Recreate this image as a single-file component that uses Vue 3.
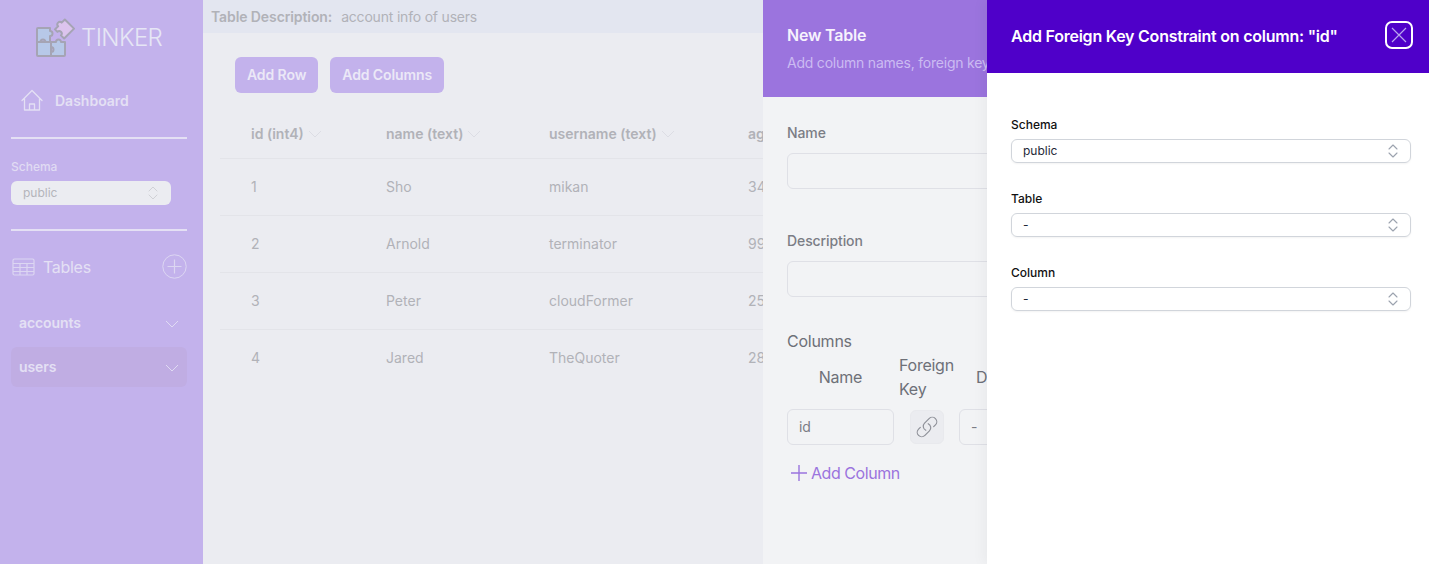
<template>
  <div class="app">
    <aside class="sidebar">
      <div class="logo">
        <svg class="logo-icon" width="40" height="40" viewBox="0 0 40 40" stroke="#a5a4b4" stroke-width="2" stroke-linejoin="round">
          <path d="M2 24H16V38H3a1 1 0 0 1-1-1z" fill="#b7c8e8" />
          <path d="M3 10H15V13a2.500 2.500 0 0 1 0 5V24H10.500a2.500 2.500 0 0 0-5 0H2V11a1 1 0 0 1 1-1z" fill="#b7c8e8" />
          <path d="M16 24H21a2.500 2.500 0 0 1 5 0H30V37a1 1 0 0 1-1 1H16V34a2.500 2.500 0 0 0 0-5z" fill="#b7c8e8" />
          <path d="M23 4H36V18H31.500a2.500 2.500 0 0 0-5 0H23V13.500a2.500 2.500 0 0 1 0-5z" fill="#dcc4ee" transform="rotate(45 29.500 11)" />
        </svg>
        <span class="logo-text">TINKER</span>
      </div>
      <div class="dash">
        <svg width="24" height="24" viewBox="0 0 24 24" fill="none" stroke="#e4e0f4" stroke-width="1.3" stroke-linejoin="round" stroke-linecap="round">
          <path d="M2 12.500L12 2.500l10 10M4.500 10.500V22h15V10.500M9.500 22v-6h5v6" />
        </svg>
        <span>Dashboard</span>
      </div>
      <hr class="rule" />
      <div class="side-schema">
        <label>Schema</label>
        <div class="side-select">
          <span>public</span>
          <svg width="12" height="16" viewBox="0 0 12 16" fill="none" stroke="#d0d1d6" stroke-width="1" stroke-linecap="round" stroke-linejoin="round">
            <path d="M2 6l4-4 4 4M2 10l4 4 4-4" />
          </svg>
        </div>
      </div>
      <hr class="rule rule-2" />
      <div class="tables-head">
        <svg width="23" height="18" viewBox="0 0 23 18" fill="none" stroke="#dcd6f2" stroke-width="1.2">
          <rect x="1" y="1" width="21" height="16" rx="1.5" />
          <path d="M1 5.500h21M1 9.500h21M1 13.500h21M8 5.500V17M15 5.500V17" />
        </svg>
        <span class="tables-label">Tables</span>
        <svg class="plus" width="25" height="25" viewBox="0 0 25 25" fill="none" stroke="#dcd6f2" stroke-width="1">
          <circle cx="12.500" cy="12.500" r="11.700" />
          <path d="M12.500 5.500v14M5.500 12.500h14" stroke-width="1.2" />
        </svg>
      </div>
      <div class="table-list">
        <div v-for="t in tables" :key="t.name" class="table-item" :class="{ active: t.active }">
          <span>{{ t.name }}</span>
          <svg width="14" height="8" viewBox="0 0 14 8" fill="none" stroke="#e0dbf3" stroke-width="1">
            <path d="M1 1l6 6 6-6" />
          </svg>
        </div>
      </div>
    </aside>

    <main class="main">
      <div class="desc">
        <b>Table Description:</b>
        <span>account info of users</span>
      </div>
      <div class="actions">
        <button class="btn">Add Row</button>
        <button class="btn">Add Columns</button>
      </div>
      <div class="grid">
        <div class="grid-row grid-head">
          <div v-for="c in columns" :key="c" class="cell">
            {{ c }}
            <svg width="14" height="8" viewBox="0 0 14 8" fill="none" stroke="#dcdde4" stroke-width="1">
              <path d="M1 1l6 6 6-6" />
            </svg>
          </div>
        </div>
        <div v-for="r in rows" :key="r[0]" class="grid-row">
          <div v-for="v in r" :key="v" class="cell">{{ v }}</div>
        </div>
      </div>
    </main>

    <section class="panel-table">
      <header class="pt-head">
        <h2>New Table</h2>
        <p>Add column names, foreign keys and default values</p>
      </header>
      <div class="pt-body">
        <label class="pt-label">Name</label>
        <div class="pt-input"></div>
        <label class="pt-label pt-desc">Description</label>
        <div class="pt-input"></div>
        <div class="pt-columns">Columns</div>
        <div class="col-grid">
          <div class="col-name">Name</div>
          <div class="col-fk">Foreign Key</div>
          <div class="col-def">Default</div>
          <div class="id-input">id</div>
          <div class="link-btn">
            <svg width="24" height="24" viewBox="0 0 24 24" fill="none" stroke="#8e9098" stroke-width="1.2" stroke-linecap="round" stroke-linejoin="round">
              <path d="M13.190 8.688a4.500 4.500 0 0 1 1.242 7.244l-4.500 4.500a4.500 4.500 0 0 1-6.364-6.364l1.757-1.757m13.350-.622l1.757-1.757a4.500 4.500 0 0 0-6.364-6.364l-4.500 4.500a4.500 4.500 0 0 0 1.242 7.244" />
            </svg>
          </div>
          <div class="def-input">-</div>
        </div>
        <div class="add-col">
          <svg width="18" height="18" viewBox="0 0 18 18" fill="none" stroke="#9b74de" stroke-width="1.4">
            <path d="M9 1v16M1 9h16" />
          </svg>
          <span>Add Column</span>
        </div>
      </div>
    </section>

    <section class="panel-fk">
      <header class="fk-head">
        <h2>Add Foreign Key Constraint on column: "id"</h2>
        <button class="close">
          <svg width="18" height="18" viewBox="0 0 18 18" fill="none" stroke="#b9a6ee" stroke-width="1.2">
            <path d="M2 2l14 14M16 2L2 16" />
          </svg>
        </button>
      </header>
      <div class="fk-body">
        <div v-for="f in fkFields" :key="f.label" class="field">
          <label>{{ f.label }}</label>
          <div class="fk-select">
            <span>{{ f.value }}</span>
            <svg width="12" height="16" viewBox="0 0 12 16" fill="none" stroke="#9ca3af" stroke-width="1.1" stroke-linecap="round" stroke-linejoin="round">
              <path d="M2 6l4-4 4 4M2 10l4 4 4-4" />
            </svg>
          </div>
        </div>
      </div>
    </section>
  </div>
</template>

<script setup>
const tables = [
  { name: 'accounts', active: false },
  { name: 'users', active: true }
];

const columns = ['id (int4)', 'name (text)', 'username (text)', 'age (int4)'];

const rows = [
  ['1', 'Sho', 'mikan', '34'],
  ['2', 'Arnold', 'terminator', '99'],
  ['3', 'Peter', 'cloudFormer', '25'],
  ['4', 'Jared', 'TheQuoter', '28']
];

const fkFields = [
  { label: 'Schema', value: 'public' },
  { label: 'Table', value: '-' },
  { label: 'Column', value: '-' }
];
</script>

<style>
html,
body {
  margin: 0;
  overflow: hidden;
}
</style>

<style scoped>
* {
  box-sizing: border-box;
}
.app {
  position: relative;
  display: flex;
  width: 1429px;
  height: 564px;
  overflow: hidden;
  font-family: Inter, "Liberation Sans", sans-serif;
  background: #ebecf1;
}
.sidebar {
  width: 203px;
  flex: none;
  background: #c3b2ec;
  padding: 0 16px 0 11px;
  display: flex;
  flex-direction: column;
}
.logo {
  display: flex;
  align-items: center;
  gap: 6px;
  height: 75px;
  padding-left: 24px;
}
.logo-text {
  font-size: 24px;
  letter-spacing: -0.6px;
  color: #e6e6f5;
  font-weight: 300;
}
.dash {
  display: flex;
  align-items: center;
  gap: 11px;
  height: 50px;
  padding-left: 9px;
  font-size: 14px;
  font-weight: 600;
  color: #e4e0f4;
}
.rule {
  width: 100%;
  margin: 12px 0 0;
  border: 0;
  border-top: 2px solid #e4e0f4;
}
.rule-2 {
  margin-top: 24px;
}
.side-schema {
  margin-top: 20px;
}
.side-schema label {
  display: block;
  font-size: 12px;
  font-weight: 500;
  color: #e0dbf3;
  margin-bottom: 7px;
}
.side-select {
  width: 160px;
  height: 24px;
  background: #ebecf1;
  border-radius: 6px;
  display: flex;
  align-items: center;
  justify-content: space-between;
  padding: 0 12px 0;
  font-size: 12px;
  color: #b4b5bb;
}
.side-select span {
  margin-top: -2px;
}
.tables-head {
  display: flex;
  align-items: center;
  height: 25px;
  margin-top: 23px;
  padding-left: 1px;
  color: #e4e0f4;
}
.tables-label {
  font-size: 16px;
  letter-spacing: -0.3px;
  margin-left: 8px;
}
.plus {
  margin-left: auto;
}
.table-list {
  display: flex;
  flex-direction: column;
  gap: 4px;
  margin-top: 24px;
}
.table-item {
  height: 40px;
  padding: 0 8px;
  border-radius: 6px;
  display: flex;
  align-items: center;
  justify-content: space-between;
  font-size: 14px;
  font-weight: 600;
  letter-spacing: -0.1px;
  color: #e4e0f4;
}
.table-item span {
  margin-top: -2px;
}
.table-item.active {
  background: #c0ade3;
}
.table-item svg {
  margin-top: 2px;
}
.main {
  width: 560px;
  flex: none;
  overflow: hidden;
}
.desc {
  height: 33px;
  background: #e3e6f0;
  padding: 0 8px;
  display: flex;
  align-items: center;
  gap: 9px;
  font-size: 14px;
  color: #b1b2b8;
}
.desc b {
  font-weight: 600;
  letter-spacing: -0.1px;
}
.desc span {
  letter-spacing: -0.2px;
}
.actions {
  display: flex;
  gap: 12px;
  padding: 24px 0 0 32px;
}
.btn {
  height: 36px;
  padding: 0 12px 2px;
  border: 0;
  border-radius: 6px;
  background: #c3b2ec;
  color: #ebe8f7;
  font-family: inherit;
  font-size: 14px;
  font-weight: 600;
  letter-spacing: -0.1px;
}
.grid {
  margin: 12px 0 0 17px;
}
.grid-row {
  display: grid;
  grid-template-columns: 135px 163px 199px 300px;
  width: 800px;
  height: 57px;
  padding: 0 0 2px 31px;
  align-items: center;
  border-top: 1px solid #e3e4e9;
  font-size: 14px;
  color: #b1b2b8;
}
.grid-head {
  height: 53px;
  border-top: 0;
  padding: 4px 0 0 31px;
  font-weight: 600;
}
.grid-head .cell {
  display: flex;
  align-items: center;
  gap: 4px;
}
.panel-table {
  position: absolute;
  top: 0;
  left: 763px;
  width: 224px;
  height: 564px;
  background: #f2f3f5;
  overflow: hidden;
  white-space: nowrap;
}
.pt-head {
  height: 97px;
  background: #9b74de;
  padding: 23px 24px 0;
}
.pt-head h2 {
  margin: 0;
  font-size: 16px;
  line-height: 24px;
  font-weight: 600;
  letter-spacing: -0.2px;
  color: #f6f2fd;
}
.pt-head p {
  margin: 6px 0 0;
  font-size: 14px;
  line-height: 20px;
  letter-spacing: -0.22px;
  color: #cbbbf2;
}
.pt-body {
  padding: 26px 24px 0;
}
.pt-label {
  display: block;
  font-size: 14px;
  line-height: 20px;
  font-weight: 500;
  letter-spacing: -0.1px;
  color: #7b7d85;
}
.pt-desc {
  margin-top: 42px;
}
.pt-input {
  width: 400px;
  height: 36px;
  margin-top: 10px;
  border: 1px solid #dfe0e6;
  border-radius: 6px;
}
.pt-columns {
  margin-top: 34px;
  font-size: 16px;
  line-height: 20px;
  letter-spacing: -0.25px;
  color: #6e7078;
}
.col-grid {
  display: grid;
  grid-template-columns: 107px 34px 200px;
  column-gap: 16px;
  row-gap: 8px;
  margin-top: 2px;
  align-items: center;
  font-size: 16px;
  letter-spacing: -0.25px;
  color: #6e7078;
}
.col-name {
  text-align: center;
}
.col-fk {
  width: 60px;
  margin-left: -11px;
  white-space: normal;
  line-height: 24px;
}
.col-def {
  padding-left: 16px;
}
.id-input,
.def-input {
  height: 36px;
  border: 1px solid #dfe0e6;
  border-radius: 6px;
  padding: 0 11px;
  font-size: 14px;
  line-height: 34px;
  color: #7b7d85;
}
.link-btn {
  width: 34px;
  height: 34px;
  border: 1px solid #e8e9ed;
  border-radius: 6px;
  background: #ebecf0;
  display: flex;
  align-items: center;
  justify-content: center;
}
.def-input {
  margin-left: -1px;
}
.add-col {
  display: flex;
  align-items: center;
  gap: 3px;
  margin: 18px 0 0 3px;
  font-size: 16px;
  letter-spacing: -0.45px;
  color: #9b74de;
}
.panel-fk {
  position: absolute;
  top: 0;
  right: 0;
  width: 442px;
  height: 564px;
  background: #fff;
  box-shadow: -4px 0 12px rgba(0, 0, 0, 0.04);
}
.fk-head {
  height: 73px;
  background: #4f00c9;
  padding: 0 16px 0 24px;
  display: flex;
  align-items: center;
  justify-content: space-between;
}
.fk-head h2 {
  margin: 0 0 2px;
  font-size: 16px;
  font-weight: 600;
  letter-spacing: -0.23px;
  color: #fff;
}
.close {
  width: 28px;
  height: 28px;
  margin-bottom: 3px;
  padding: 0;
  border: 2px solid #fff;
  border-radius: 7px;
  background: transparent;
  display: flex;
  align-items: center;
  justify-content: center;
}
.fk-body {
  padding: 44px 18px 0 24px;
  display: flex;
  flex-direction: column;
  gap: 28px;
}
.field label {
  display: block;
  font-size: 12px;
  line-height: 16px;
  font-weight: 500;
  color: #111;
  margin-bottom: 6px;
}
.fk-select {
  height: 24px;
  border: 1px solid #d1d5db;
  border-radius: 6px;
  display: flex;
  align-items: center;
  justify-content: space-between;
  padding: 0 11px;
  font-size: 12px;
  color: #1f2937;
  box-shadow: 0 1px 2px rgba(0, 0, 0, 0.05);
}
.fk-select span {
  margin-top: -2px;
}
</style>
